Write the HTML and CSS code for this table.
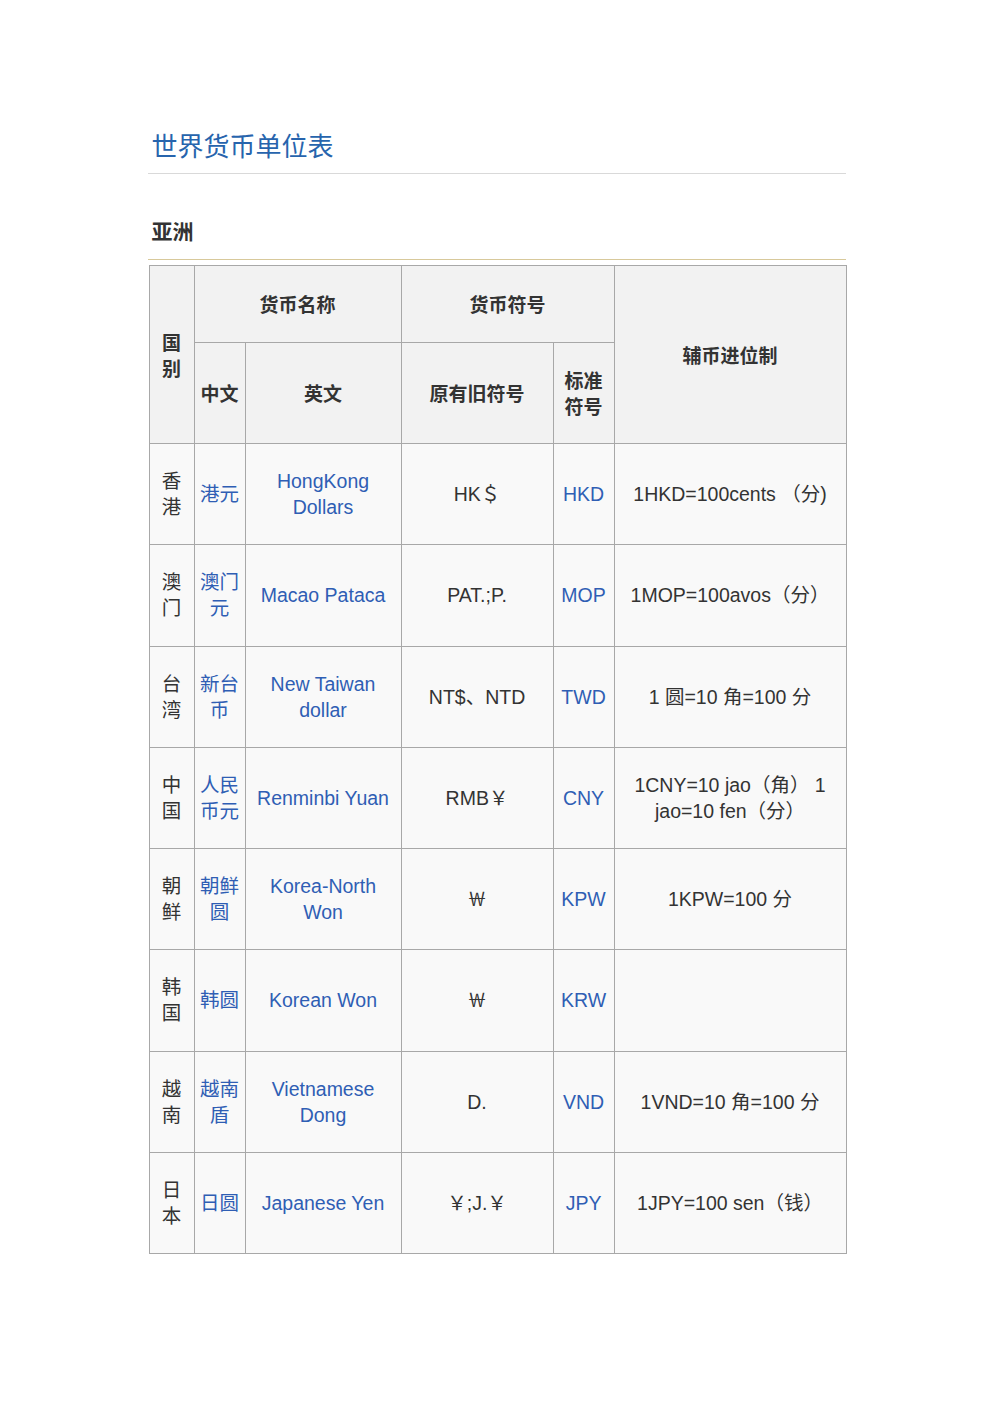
FILE: index.html
```html
<!DOCTYPE html>
<html lang="zh-CN">
<head>
<meta charset="utf-8">
<title>世界货币单位表</title>
<link rel="stylesheet" href="styles.css">
</head>
<body>
<div class="page">
  <h1 class="title">世界货币单位表</h1>
  <h2 class="section">亚洲</h2>
  <table class="currency">
    <colgroup>
      <col class="c1"><col class="c2"><col class="c3"><col class="c4"><col class="c5"><col class="c6">
    </colgroup>
    <thead>
      <tr class="hr1">
        <th rowspan="2">国别</th>
        <th colspan="2">货币名称</th>
        <th colspan="2">货币符号</th>
        <th rowspan="2">辅币进位制</th>
      </tr>
      <tr class="hr2">
        <th>中文</th>
        <th>英文</th>
        <th>原有旧符号</th>
        <th>标准符号</th>
      </tr>
    </thead>
    <tbody>
      <tr>
        <td>香港</td><td class="link">港元</td><td class="link">HongKong Dollars</td><td>HK＄</td><td class="link">HKD</td><td>1HKD=100cents （分)</td>
      </tr>
      <tr>
        <td>澳门</td><td class="link">澳门元</td><td class="link">Macao Pataca</td><td>PAT.;P.</td><td class="link">MOP</td><td>1MOP=100avos（分）</td>
      </tr>
      <tr>
        <td>台湾</td><td class="link">新台币</td><td class="link">New Taiwan dollar</td><td>NT$、NTD</td><td class="link">TWD</td><td>1 圆=10 角=100 分</td>
      </tr>
      <tr>
        <td>中国</td><td class="link">人民币元</td><td class="link">Renminbi Yuan</td><td>RMB￥</td><td class="link">CNY</td><td>1CNY=10 jao（角） 1 jao=10 fen（分）</td>
      </tr>
      <tr>
        <td>朝鲜</td><td class="link">朝鲜圆</td><td class="link">Korea-North Won</td><td>￦</td><td class="link">KPW</td><td>1KPW=100 分</td>
      </tr>
      <tr>
        <td>韩国</td><td class="link">韩圆</td><td class="link">Korean Won</td><td>￦</td><td class="link">KRW</td><td></td>
      </tr>
      <tr>
        <td>越南</td><td class="link">越南盾</td><td class="link">Vietnamese Dong</td><td>D.</td><td class="link">VND</td><td>1VND=10 角=100 分</td>
      </tr>
      <tr>
        <td>日本</td><td class="link">日圆</td><td class="link">Japanese Yen</td><td>￥;J.￥</td><td class="link">JPY</td><td>1JPY=100 sen（钱）</td>
      </tr>
    </tbody>
  </table>
</div>
</body>
</html>
```

FILE: styles.css
```css
html, body {
  margin: 0;
  padding: 0;
  background: #ffffff;
}

body {
  font-family: "Liberation Sans", "Noto Sans CJK SC", sans-serif;
  color: #333333;
}

.page {
  width: 698px;
  margin: 0 auto;
  padding-top: 129px;
}

.title {
  margin: 0;
  padding: 0 0 12px 4px;
  font-family: "Noto Sans CJK SC", sans-serif;
  font-size: 26px;
  line-height: 32px;
  font-weight: normal;
  color: #2764ad;
  border-bottom: 1px solid #d9d9d9;
}

.section {
  margin: 42px 0 0 0;
  padding: 0 0 15px 4px;
  font-family: "Noto Sans CJK SC", sans-serif;
  font-size: 21px;
  line-height: 28px;
  font-weight: bold;
  color: #333333;
  border-bottom: 1px solid #d8c99b;
}

.currency {
  margin: 5px 0 0 1px;
  width: 697px;
  table-layout: fixed;
  border-collapse: collapse;
  border: 1px solid #a8a8a8;
  font-size: 19.5px;
  line-height: 26px;
}

.c1 { width: 45px; }
.c2 { width: 51px; }
.c3 { width: 156px; }
.c4 { width: 152px; }
.c5 { width: 61px; }
.c6 { width: 232px; }

.currency th,
.currency td {
  border: 1px solid #a8a8a8;
  padding: 0 5px;
  text-align: center;
  vertical-align: middle;
}

.currency th {
  background: #f2f2f2;
  font-family: "Noto Sans CJK SC", sans-serif;
  font-size: 19px;
  font-weight: 600;
  color: #333333;
}

.hr1 th { height: 76px; }
.hr2 th { height: 100px; }

.currency td {
  background: #f9f9f9;
  height: 100.25px;
  color: #333333;
}

.currency td.link {
  color: #2f5eb4;
}
```
